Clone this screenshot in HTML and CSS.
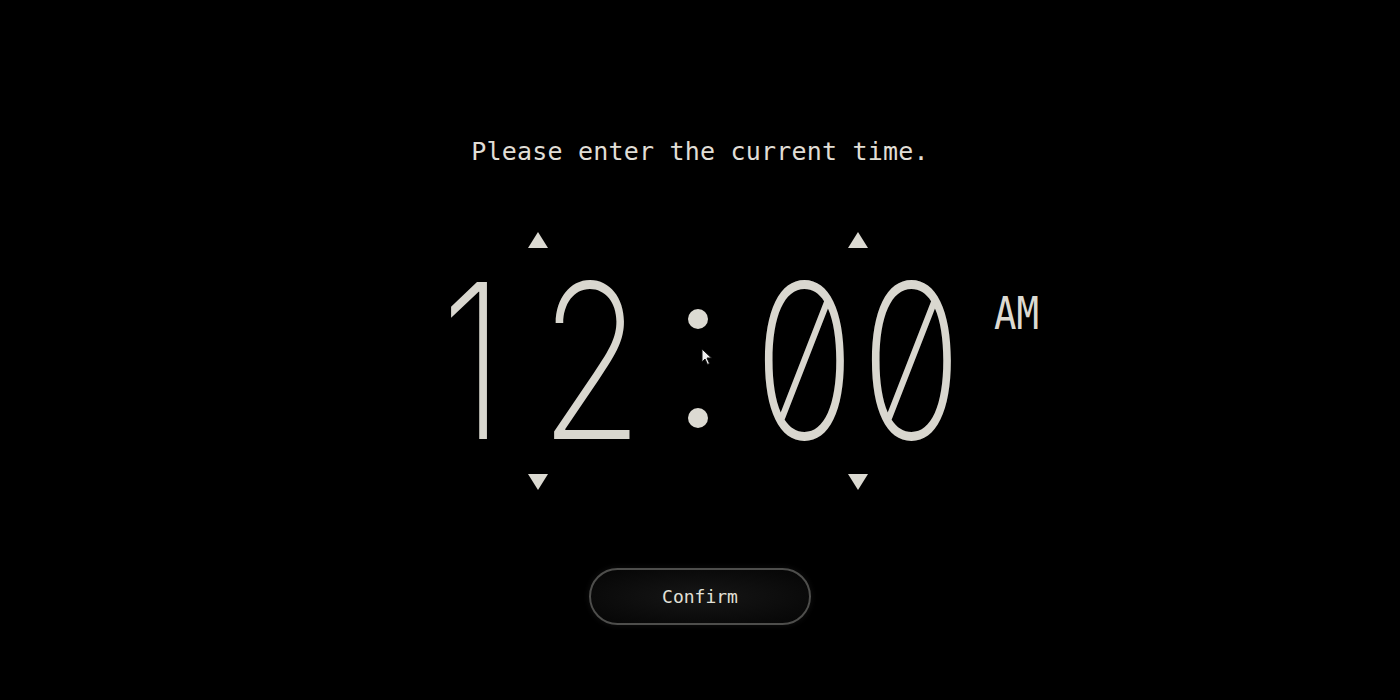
FILE: index.html
```html
<!DOCTYPE html>
<html lang="en">
<head>
<meta charset="utf-8">
<title>Set time</title>
<link rel="stylesheet" href="styles.css">
</head>
<body>
<main class="screen">
  <h1 class="prompt">Please enter the current time.</h1>

  <div class="clock-row">
    <div class="clock">
      <div class="unit">
        <button class="step up" aria-label="Increase hours"></button>
        <div class="digits">
          <span class="digit one">1</span><span class="digit">2</span>
        </div>
        <button class="step down" aria-label="Decrease hours"></button>
      </div>

      <div class="colon" aria-label=":">
        <span class="dot"></span>
        <span class="dot"></span>
      </div>

      <div class="unit">
        <button class="step up" aria-label="Increase minutes"></button>
        <div class="digits">
          <span class="digit">0</span><span class="digit">0</span>
        </div>
        <button class="step down" aria-label="Decrease minutes"></button>
      </div>

      <svg class="pointer" width="12" height="18" viewBox="0 0 12 18" aria-hidden="true">
        <path d="M1 1 L1 14 L4 11 L6.5 16.5 L8.5 15.5 L6 10 L10.5 10 Z" fill="#f2f2f2" stroke="#111" stroke-width="1"/>
      </svg>
    </div>
    <div class="meridiem">AM</div>
  </div>

  <button class="confirm">Confirm</button>
</main>
</body>
</html>
```

FILE: styles.css
```css
html, body {
  margin: 0;
  height: 100%;
  background: #000;
}

body {
  color: #dcdad2;
  font-family: "DejaVu Sans Mono", "Liberation Mono", monospace;
}

.screen {
  height: 700px;
  display: flex;
  flex-direction: column;
  align-items: center;
  padding-top: 134px;
  box-sizing: border-box;
}

.prompt {
  margin: 0;
  font-size: 25px;
  font-weight: normal;
  line-height: 36px;
  letter-spacing: 0.2px;
  color: #e0ded6;
}

/* clock: centred middle column, AM label in the right column */
.clock-row {
  width: 100%;
  display: grid;
  grid-template-columns: 1fr auto 1fr;
  margin-top: 62px;
}

.clock {
  grid-column: 2;
  position: relative;
  display: flex;
  align-items: center;
  padding-right: 4px;
}

.unit {
  display: flex;
  flex-direction: column;
  align-items: center;
}

.step {
  width: 20px;
  height: 16px;
  padding: 0;
  border: 0;
  background: #dcdad2;
  cursor: pointer;
}

.step.up {
  clip-path: polygon(50% 0, 100% 100%, 0 100%);
}

.step.down {
  clip-path: polygon(0 0, 100% 0, 50% 100%);
}

.digits {
  display: flex;
  height: 205px;
  margin: 10px 0 11px;
}

.digit {
  width: 107px;
  display: flex;
  justify-content: center;
  font-family: "Inter", "Roboto", sans-serif;
  font-size: 216px;
  font-weight: 200;
  line-height: 205px;
  font-feature-settings: "zero" 1;
  transform: scaleX(0.78);
  color: #d9d7cf;
}

/* the flag-only one sits left of its cell */
.digit.one {
  position: relative;
  left: -12px;
}

.colon {
  width: 106px;
  display: flex;
  flex-direction: column;
  align-items: center;
  gap: 79px;
  margin-top: 14px;
}

.dot {
  width: 20px;
  height: 20px;
  border-radius: 50%;
  background: #dcdad2;
}

.pointer {
  position: absolute;
  left: 270px;
  top: 116px;
}

.meridiem {
  grid-column: 3;
  align-self: start;
  margin: 60px 0 0 25px;
  font-family: "DejaVu Sans Mono", "Liberation Mono", monospace;
  font-size: 44px;
  line-height: 44px;
  transform: scaleX(0.85);
  transform-origin: left center;
  color: #dcdad2;
}

.confirm {
  margin-top: 78px;
  width: 222px;
  height: 57px;
  border-radius: 29px;
  border: 2px solid #4e4e4c;
  background: radial-gradient(ellipse at center, #161616 0%, #0a0a0a 70%, #050505 100%);
  box-shadow: 0 0 6px rgba(120, 120, 120, 0.15);
  color: #e2e0d8;
  font-family: "DejaVu Sans Mono", "Liberation Mono", monospace;
  font-size: 18px;
  cursor: pointer;
}
```
